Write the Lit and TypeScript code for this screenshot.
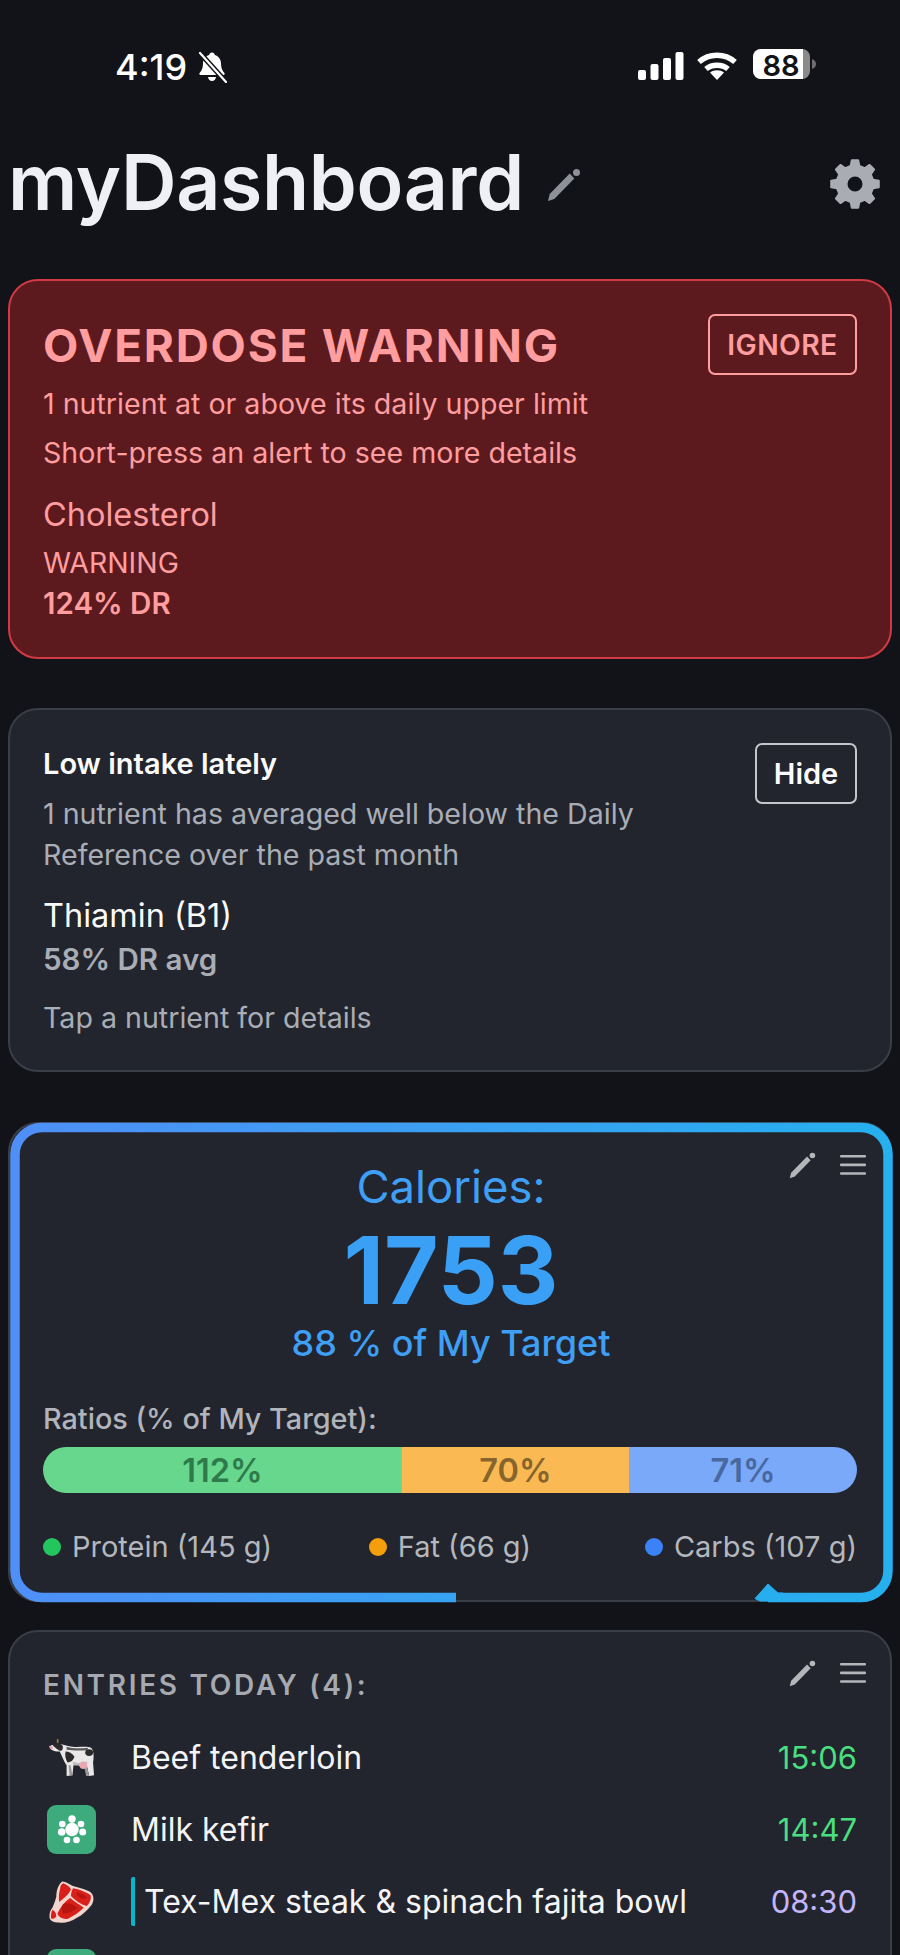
import { LitElement, html, css } from "lit";
import { customElement } from "lit/decorators.js";

// gear outline with n trapezoid teeth, centred on 0,0
function gearPath(n: number, outer: number, root: number, hole: number) {
  const pts: string[] = [];
  const step = (Math.PI * 2) / n;
  for (let i = 0; i < n; i++) {
    const a = i * step - Math.PI / 2;
    const p = (r: number, t: number) =>
      `${(r * Math.cos(a + t)).toFixed(2)} ${(r * Math.sin(a + t)).toFixed(2)}`;
    pts.push(p(root, -step * 0.3), p(outer, -step * 0.17), p(outer, step * 0.17), p(root, step * 0.3));
  }
  return `M${pts.join("L")}ZM${hole} 0A${hole} ${hole} 0 1 0 ${-hole} 0A${hole} ${hole} 0 1 0 ${hole} 0Z`;
}

const pencil = (color: string) => html`<svg class="pencil" viewBox="0 0 34 34" fill="${color}">
  <path d="M1 33 2.700 26.100 22.700 5.600 27.300 10.400 7.300 30.900Z" />
  <circle cx="29.500" cy="4.500" r="3.500" />
</svg>`;

const menu = html`<svg class="menu" viewBox="0 0 26 22" fill="#b4b6ba">
  <rect x="0" y="1" width="26" height="2.6" rx="1" />
  <rect x="0" y="9.6" width="26" height="2.6" rx="1" />
  <rect x="0" y="18.2" width="26" height="2.6" rx="1" />
</svg>`;

const cow = html`<svg class="food" viewBox="-2 -5 50 50">
  <path d="M9 7C14 5 18 9 24 9 30 10 38 8 43 10 46 13 46 20 45 25L46 38 41 39 39 30C36 31 33 30 30 28 28 28 26 28 25 28L24 38 18 39 18 28C15 24 13 18 11 14 7 14 2 13 1 10 0 7 5 7 9 7Z" fill="#e9e7e7" />
  <path d="M39 30 41 39 38 39 36 30ZM22 28 24 38 21 38 20 28Z" fill="#9a9898" />
  <path d="M24 24C28 26 34 26 39 24L39 30C36 31 33 30 30 28 28 28 26 28 25 28Z" fill="#bdbbbb" />
  <path d="M18 9C24 11 32 11 40 10L39 12.500C32 13 24 13 18 12Z" fill="#5a585a" />
  <path d="M4 6C7 4 11 5 14 8 15 11 13 14 11 13 8 12 6 9 4 8Z" fill="#2c2a2b" />
  <path d="M17 14C20 14 24 16 26 19 25 23 22 25 19 25 17 22 16 18 17 14Z" fill="#2c2a2b" />
  <ellipse cx="41" cy="15" rx="4" ry="3.500" fill="#2c2a2b" />
  <circle cx="35" cy="28" r="3.800" fill="#e9a8b2" />
  <path d="M0 8C2 8 4 9 4 10 4 12 2 12 1 11Z" fill="#e6a0a6" />
  <path d="M8 5 8 1 9.500 1 10 5Z" fill="#a07b3c" />
</svg>`;

const steak = html`<svg class="food" viewBox="-2.500 -3.500 50 50">
  <path d="M13 1C17 1 20 4 25 6 32 8 40 10 43 13 46 17 45 22 43 25 38 31 33 36 28 38 22 42 15 44 10 43 4 43 0 41 0 37 0 33 1 30 3 28 5 24 6 20 7 17 7 12 8 5 13 1Z" fill="#f3d5d0" />
  <path d="M14 3C17 4 20 6 22 9 20 14 15 18 10 22 9 17 10 12 11 8 11 6 12 4 14 3ZM24 8C30 9 38 12 42 15 43 19 41 23 38 26 32 25 26 20 22 16 22 13 23 10 24 8ZM21 18C26 22 31 25 35 28 30 33 25 36 19 39 14 40 10 38 8 34 11 28 15 22 21 18ZM3 30C5 31 7 33 7 37 5 39 2 40 1.500 38 1.500 35 2 32 3 30Z" fill="#d81f1a" />
  <path d="M14 24C19 22 24 24 29 28 24 32 19 34 14 34 12 31 12 27 14 24ZM28 12C33 13 37 15 38 18 35 20 31 18 28 15Z" fill="#b81510" />
</svg>`;

const kefir = html`<svg class="food" viewBox="0 0 49 49">
  <rect x="0" y="0" width="49" height="49" rx="9" fill="#3dab7c" />
  <g fill="#fff">
    <circle cx="25" cy="24.500" r="6.700" /><circle cx="25" cy="14" r="3.700" /><circle cx="34" cy="19" r="3.300" />
    <circle cx="35.700" cy="27" r="3.500" /><circle cx="29.500" cy="35" r="3.300" /><circle cx="20" cy="35" r="3.300" />
    <circle cx="14.700" cy="27" r="3.800" /><circle cx="15.300" cy="19" r="3.300" />
  </g>
</svg>`;

type Entry = { icon: unknown; name: string; time: string; tone: string; marked?: boolean };

const entries: Entry[] = [
  { icon: cow, name: "Beef tenderloin", time: "15:06", tone: "green" },
  { icon: kefir, name: "Milk kefir", time: "14:47", tone: "green" },
  { icon: steak, name: "Tex-Mex steak & spinach fajita bowl", time: "08:30", tone: "purple", marked: true },
];

const macros = [
  { label: "112%", cls: "protein", share: 359 },
  { label: "70%", cls: "fat", share: 227 },
  { label: "71%", cls: "carbs", share: 228 },
];

const legend = [
  { label: "Protein (145 g)", color: "#22c55e" },
  { label: "Fat (66 g)", color: "#f59e0b" },
  { label: "Carbs (107 g)", color: "#3b82f6" },
];

@customElement("app-root")
export class AppRoot extends LitElement {
  static styles = css`
    :host {
      display: block;
      height: 1955px;
      overflow: hidden;
      background: #111318;
      font-family: Inter, "Liberation Sans", sans-serif;
      color: #f0f1f5;
    }
    .status {
      height: 93px;
      box-sizing: border-box;
      padding: 46px 0 0 115px;
      display: flex;
      align-items: flex-start;
    }
    .clock {
      font-size: 36px;
      line-height: 44px;
      font-weight: 500;
      color: #fff;
      width: 82px;
      margin-top: -1px;
    }
    .bell { width: 30px; height: 32px; margin-top: 5px; }
    .signal-group {
      margin-left: auto;
      margin-right: 83px;
      display: flex;
      gap: 12px;
      margin-top: 5px;
      align-items: flex-start;
    }
    .signal { width: 46px; height: 30px; }
    .wifi { width: 42px; height: 30px; }
    .battery { width: 64px; height: 32px; margin: -2px 0 0 3px; }
    header {
      height: 186px;
      box-sizing: border-box;
      padding: 47px 19px 0 8px;
      display: flex;
      align-items: flex-start;
    }
    h1 {
      margin: 0;
      font-size: 77px;
      line-height: 84px;
      font-weight: 600;
      letter-spacing: -0.35px;
      color: #eef0f5;
    }
    header .pencil { width: 34px; height: 34px; margin: 28px 0 0 23px; }
    .gear { width: 52px; height: 52px; margin: 18px 0 0 auto; }
    .card {
      margin: 0 8px;
      border: 2px solid #3a3e47;
      border-radius: 30px;
      background: #22252d;
      padding: 0 33px;
      position: relative;
    }
    .danger {
      height: 380px;
      box-sizing: border-box;
      background: #5c1a1f;
      border-color: #d13a44;
      color: #ff9d9f;
      padding-top: 33px;
    }
    .head { display: flex; justify-content: space-between; align-items: flex-start; }
    .danger h2 {
      margin: 5px 0 0;
      font-size: 45.8px;
      line-height: 54px;
      font-weight: 700;
      letter-spacing: 1.8px;
    }
    .btn {
      box-sizing: border-box;
      height: 61px;
      border: 2px solid currentColor;
      border-radius: 7px;
      display: flex;
      align-items: center;
      justify-content: center;
      font-size: 28.3px;
      font-weight: 600;
    }
    .ignore { width: 149px; letter-spacing: 0.4px; }
    .sub { font-size: 28.6px; line-height: 41px; }
    .danger .sub { line-height: 49px; margin-top: 4px; }
    .danger .sub + .sub { margin-top: 0; }
    .nutrient { font-size: 32.5px; line-height: 40px; }
    .danger .nutrient { margin-top: 18px; }
    .level { font-size: 28.4px; line-height: 41px; margin-top: 7px; }
    .strong { font-size: 29.5px; line-height: 41px; font-weight: 600; }
    .quiet {
      height: 364px;
      box-sizing: border-box;
      margin-top: 49px;
      padding-top: 33px;
    }
    .quiet h2 {
      margin: 0;
      font-size: 29px;
      line-height: 41px;
      font-weight: 600;
      color: #fafafa;
    }
    .hide { width: 102px; font-size: 29px; color: #fafafa; border-color: #c4c6cb; }
    .quiet .head { height: 50px; }
    .quiet .sub { color: #a9adb5; }
    .quiet .nutrient { margin-top: 21px; color: #fafafa; }
    .quiet .strong { color: #a9adb5; margin-top: 3px; }
    .quiet .hint { color: #a9adb5; font-size: 28.6px; line-height: 41px; margin-top: 17px; }
    .cal {
      height: 480px;
      box-sizing: border-box;
      margin-top: 50px;
      padding-top: 35px;
      text-align: center;
    }
    .ring { position: absolute; left: -2px; top: -2px; width: 884px; height: 480px; overflow: visible; }
    .tools {
      position: absolute;
      right: 24px;
      top: 28px;
      display: flex;
      gap: 24px;
      align-items: flex-start;
    }
    .tools .pencil { width: 27px; height: 27px; }
    .tools .menu { width: 26px; height: 22px; margin-top: 2px; }
    .c-title, .c-num, .c-pct { padding-left: 2px; }
    .c-title { font-size: 45.4px; line-height: 56px; color: #3f9ff5; }
    .c-num { font-size: 94px; line-height: 100px; font-weight: 700; color: #3aa0f6; margin-top: 5px; }
    .c-pct { font-size: 36px; line-height: 44px; font-weight: 500; color: #3f9ff5; margin-top: 1px; }
    .ratio-label {
      text-align: left;
      font-size: 28.8px;
      line-height: 36px;
      font-weight: 500;
      color: #b1b4ba;
      margin-top: 36px;
    }
    .bar {
      display: flex;
      height: 46px;
      border-radius: 23px;
      overflow: hidden;
      margin-top: 10px;
    }
    .bar div {
      display: flex;
      align-items: center;
      justify-content: center;
      font-size: 32.5px;
      font-weight: 600;
    }
    .protein { background: #67d78e; color: #2f7a4b; }
    .fat { background: #fbb954; color: #86652c; }
    .carbs { background: #79a9f8; color: #48689f; }
    .legend {
      display: flex;
      justify-content: space-between;
      margin-top: 34px;
      font-size: 29px;
      line-height: 40px;
      color: #b4b7bd;
    }
    .legend span { display: flex; align-items: center; gap: 11px; }
    .legend span:nth-child(2) { margin-right: 17px; }
    .legend i { width: 18px; height: 18px; border-radius: 50%; }
    .entries {
      margin-top: 28px;
      padding-top: 33px;
      height: 420px;
      box-sizing: border-box;
    }
    .entries h3 {
      margin: 0;
      font-size: 28px;
      line-height: 40px;
      font-weight: 600;
      letter-spacing: 2.7px;
      color: #a6a9b0;
    }
    .rows { margin-top: 16px; }
    .row {
      height: 72px;
      display: flex;
      align-items: center;
    }
    .food { width: 49px; height: 49px; margin-left: 4px; flex: none; }
    .name {
      margin-left: 35px;
      font-size: 32px;
      color: #f4f4f6;
      flex: 1;
    }
    .name.marked {
      border-left: 4px solid #06b6c8;
      border-radius: 2px;
      padding-left: 9px;
      height: 49px;
      line-height: 49px;
    }
    .time { font-size: 31px; }
    .green { color: #4ade80; }
    .purple { color: #c4b5fd; }
  `;

  private renderTools() {
    return html`<div class="tools">${pencil("#b4b6ba")}${menu}</div>`;
  }

  render() {
    return html`
      <div class="status">
        <div class="clock">4:19</div>
        <svg class="bell" viewBox="0 0 30 32">
          <path d="M15 1.500c1.600 0 2.600 1 2.800 2.400 4 1.200 6.200 4.600 6.200 8.600 0 4 1 7 3.400 9.600.7.8.2 2-1 2H3.600c-1.200 0-1.700-1.200-1-2C5 19.500 6 16.500 6 12.500c0-4 2.200-7.400 6.200-8.600.2-1.400 1.200-2.400 2.800-2.400ZM11 26h8c-.4 2.400-2 4-4 4s-3.600-1.600-4-4Z" fill="#fff" />
          <path d="M3 2 29 31" stroke="#111318" stroke-width="5" />
          <path d="M3 2 29 31" stroke="#fff" stroke-width="2.200" stroke-linecap="round" />
        </svg>
        <div class="signal-group">
          <svg class="signal" viewBox="0 0 46 30" fill="#fff">
            <rect x="0" y="19" width="8" height="10" rx="2" /><rect x="12.500" y="13" width="8" height="16" rx="2" />
            <rect x="25" y="7" width="8" height="22" rx="2" /><rect x="37.500" y="1" width="8" height="28" rx="2" />
          </svg>
          <svg class="wifi" viewBox="0 0 42 30" fill="none" stroke="#fff" stroke-width="5.500">
            <path d="M3 11C13 2 29 2 39 11" /><path d="M10 18C16 13 26 13 32 18" />
            <path d="M21 29l-7-7.500c4-3 10-3 14 0Z" fill="#fff" stroke="none" />
          </svg>
          <svg class="battery" viewBox="0 0 64 32">
            <rect x="0" y="0" width="57" height="30" rx="8" fill="#8a8a8c" />
            <path d="M8 0H50V30H8a8 8 0 0 1-8-8V8a8 8 0 0 1 8-8Z" fill="#fff" />
            <path d="M59 10c3 1 4 3 4 5s-1 4-4 5Z" fill="#6f6f72" />
            <text x="28" y="26.500" text-anchor="middle" font-size="29" font-weight="600" font-family="Inter, sans-serif" fill="#111318">88</text>
          </svg>
        </div>
      </div>

      <header>
        <h1>myDashboard</h1>
        ${pencil("#8d9096")}
        <svg class="gear" viewBox="-26 -26 52 52">
          <path d="${gearPath(8, 24, 18.500, 8.500)}" fill="#a9adb3" fill-rule="evenodd" stroke="#a9adb3" stroke-width="2" stroke-linejoin="round" />
        </svg>
      </header>

      <section class="card danger">
        <div class="head">
          <h2>OVERDOSE WARNING</h2>
          <div class="btn ignore">IGNORE</div>
        </div>
        <div class="sub">1 nutrient at or above its daily upper limit</div>
        <div class="sub">Short-press an alert to see more details</div>
        <div class="nutrient">Cholesterol</div>
        <div class="level">WARNING</div>
        <div class="strong">124% DR</div>
      </section>

      <section class="card quiet">
        <div class="head">
          <h2>Low intake lately</h2>
          <div class="btn hide">Hide</div>
        </div>
        <div class="sub">1 nutrient has averaged well below the Daily</div>
        <div class="sub">Reference over the past month</div>
        <div class="nutrient">Thiamin (B1)</div>
        <div class="strong">58% DR avg</div>
        <div class="hint">Tap a nutrient for details</div>
      </section>

      <section class="card cal">
        <svg class="ring" viewBox="0 0 884 480">
          <defs>
            <linearGradient id="ringMain" gradientUnits="userSpaceOnUse" x1="0" y1="0" x2="884" y2="0">
              <stop offset="0" stop-color="#4f8ff7" /><stop offset="1" stop-color="#25b0ee" />
            </linearGradient>
            <linearGradient id="ringTail" gradientUnits="userSpaceOnUse" x1="0" y1="0" x2="448" y2="0">
              <stop offset="0" stop-color="#4f8ff7" /><stop offset="1" stop-color="#36a3f2" />
            </linearGradient>
          </defs>
          <path d="M448 475.500H34A27 27 0 0 1 7 448.500" fill="none" stroke="url(#ringTail)" stroke-width="9.500" />
          <path d="M7 449V32.500A27 27 0 0 1 34 5.500H853A27 27 0 0 1 880 32.500V448.500A27 27 0 0 1 853 475.500H760" fill="none" stroke="url(#ringMain)" stroke-width="9.500" />
          <path d="M747 476.500 760 462 770 471H775V479H752Z" fill="#27aeee" stroke="#27aeee" stroke-width="1" stroke-linejoin="round" />
        </svg>
        ${this.renderTools()}
        <div class="c-title">Calories:</div>
        <div class="c-num">1753</div>
        <div class="c-pct">88 % of My Target</div>
        <div class="ratio-label">Ratios (% of My Target):</div>
        <div class="bar">
          ${macros.map(
            (m) => html`<div class=${m.cls} style="width:${m.share}px">${m.label}</div>`
          )}
        </div>
        <div class="legend">
          ${legend.map(
            (l) => html`<span><i style="background:${l.color}"></i>${l.label}</span>`
          )}
        </div>
      </section>

      <section class="card entries">
        ${this.renderTools()}
        <h3>ENTRIES TODAY (4):</h3>
        <div class="rows">
          ${entries.map(
            (e) => html`<div class="row">
              ${e.icon}
              <div class="name ${e.marked ? "marked" : ""}">${e.name}</div>
              <div class="time ${e.tone}">${e.time}</div>
            </div>`
          )}
          <div class="row">${kefir}</div>
        </div>
      </section>
    `;
  }
}
